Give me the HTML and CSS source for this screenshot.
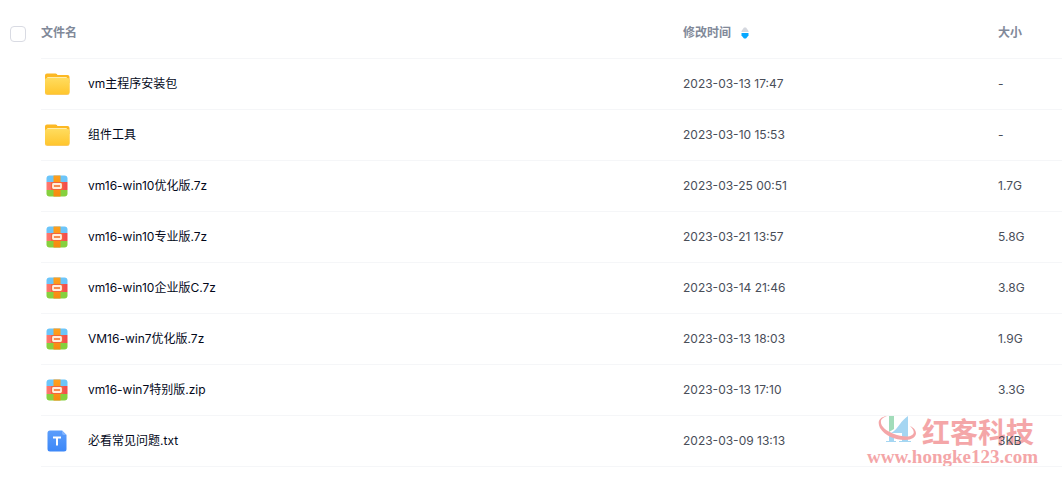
FILE: index.html
```html
<!DOCTYPE html>
<html lang="zh-CN">
<head>
  <meta charset="UTF-8" />
  <meta name="viewport" content="width=device-width, initial-scale=1.0"/>
  <title>文件列表</title>

  <link rel="stylesheet" href="styles.css">
</head>
<body>
  <!-- icons used in the rows -->
  <svg class="defs" width="0" height="0" aria-hidden="true">
    <defs>
      <linearGradient id="folderFront" x1="0" y1="0" x2="0" y2="1">
        <stop offset="0" stop-color="#ffdc5e"/>
        <stop offset="1" stop-color="#ffc62e"/>
      </linearGradient>
      <linearGradient id="txtFill" x1="0" y1="0" x2="0" y2="1">
        <stop offset="0" stop-color="#5b9dfb"/>
        <stop offset="1" stop-color="#3c87f8"/>
      </linearGradient>
      <linearGradient id="zipRed" x1="0" y1="0" x2="1" y2="0">
        <stop offset="0" stop-color="#ff7a70"/>
        <stop offset="1" stop-color="#f04a48"/>
      </linearGradient>
      <linearGradient id="zipBand" x1="0" y1="0" x2="0" y2="1">
        <stop offset="0" stop-color="#ffa01c"/>
        <stop offset="1" stop-color="#f58a10"/>
      </linearGradient>
      <clipPath id="zipShape"><rect x="5.5" y="5.5" width="21" height="21" rx="3"/></clipPath>
    </defs>
    <symbol id="icon-folder" viewBox="0 0 32 32">
      <path d="M4 7.5a2 2 0 0 1 2-2h8.500a2 2 0 0 1 2 1.500H26.500a2 2 0 0 1 2 2v6H4z" fill="#fcb823"/>
      <rect x="6" y="9" width="20" height="6" rx="1" fill="#ffedaa"/>
      <rect x="4" y="10" width="24.5" height="17" rx="2.5" fill="#fbc95c"/>
      <rect x="4" y="10" width="24.5" height="16" rx="2.5" fill="url(#folderFront)"/>
    </symbol>
    <symbol id="icon-zip" viewBox="0 0 32 32">
      <g clip-path="url(#zipShape)">
        <rect x="5" y="5" width="22" height="7" fill="#6cc5f9"/>
        <rect x="5" y="12" width="22" height="8" fill="url(#zipRed)"/>
        <rect x="5" y="20" width="22" height="7" fill="#86d03e"/>
        <rect x="12.5" y="5" width="7" height="22" fill="url(#zipBand)"/>
      </g>
      <rect x="10" y="12" width="12" height="8" rx="1" fill="#f4673b"/>
      <rect x="12" y="14" width="8" height="4" rx="0.5" fill="#f58b50" stroke="#ffeede" stroke-width="1.8"/>
    </symbol>
    <symbol id="icon-txt" viewBox="0 0 32 32">
      <path d="M9 5.5H21l4.500 4.500v14a2.500 2.500 0 0 1-2.500 2.500H9A2.500 2.500 0 0 1 6.500 24V8A2.500 2.500 0 0 1 9 5.500z" fill="url(#txtFill)"/>
      <path d="M21 5.5l4.500 4.500h-2.500a2 2 0 0 1-2-2z" fill="#82b5ff"/>
      <path d="M12 12.5h8M16 12.500v8" fill="none" stroke="#fff" stroke-width="2"/>
    </symbol>
  </svg>

  <main class="file-list">
    <table>
      <thead>
        <tr>
          <th class="check"><input type="checkbox" aria-label="全选"></th>
          <th class="name" scope="col">文件名</th>
          <th class="time" scope="col">
            <button type="button" class="sort">修改时间
              <svg width="8" height="12" viewBox="0 0 8 12" aria-hidden="true">
                <path d="M0.5 5V4L3 0.500h2L7.500 4v1z" fill="#d4d7de"/>
                <path d="M0.5 6h7v2.500L5 11.500H3L0.500 8.500z" fill="#06a7ff"/>
              </svg>
            </button>
          </th>
          <th class="size" scope="col">大小</th>
        </tr>
      </thead>
      <tbody>
        <tr>
          <td class="check"></td>
          <td class="name"><a href="#"><svg class="icon"><use href="#icon-folder"/></svg>vm主程序安装包</a></td>
          <td class="time">2023-03-13 17:47</td>
          <td class="size">-</td>
        </tr>
        <tr>
          <td class="check"></td>
          <td class="name"><a href="#"><svg class="icon"><use href="#icon-folder"/></svg>组件工具</a></td>
          <td class="time">2023-03-10 15:53</td>
          <td class="size">-</td>
        </tr>
        <tr>
          <td class="check"></td>
          <td class="name"><a href="#"><svg class="icon"><use href="#icon-zip"/></svg>vm16-win10优化版.7z</a></td>
          <td class="time">2023-03-25 00:51</td>
          <td class="size">1.7G</td>
        </tr>
        <tr>
          <td class="check"></td>
          <td class="name"><a href="#"><svg class="icon"><use href="#icon-zip"/></svg>vm16-win10专业版.7z</a></td>
          <td class="time">2023-03-21 13:57</td>
          <td class="size">5.8G</td>
        </tr>
        <tr>
          <td class="check"></td>
          <td class="name"><a href="#"><svg class="icon"><use href="#icon-zip"/></svg>vm16-win10企业版C.7z</a></td>
          <td class="time">2023-03-14 21:46</td>
          <td class="size">3.8G</td>
        </tr>
        <tr>
          <td class="check"></td>
          <td class="name"><a href="#"><svg class="icon"><use href="#icon-zip"/></svg>VM16-win7优化版.7z</a></td>
          <td class="time">2023-03-13 18:03</td>
          <td class="size">1.9G</td>
        </tr>
        <tr>
          <td class="check"></td>
          <td class="name"><a href="#"><svg class="icon"><use href="#icon-zip"/></svg>vm16-win7特别版.zip</a></td>
          <td class="time">2023-03-13 17:10</td>
          <td class="size">3.3G</td>
        </tr>
        <tr>
          <td class="check"></td>
          <td class="name"><a href="#"><svg class="icon"><use href="#icon-txt"/></svg>必看常见问题.txt</a></td>
          <td class="time">2023-03-09 13:13</td>
          <td class="size">3KB</td>
        </tr>
      </tbody>
    </table>

    <div class="watermark">
      <div class="brand">
        <svg width="40" height="32" viewBox="0 0 40 32" aria-hidden="true">
          <path d="M8 0h10v1h-2v13l-5 3V1H8z" fill="#a2dcba"/>
          <path d="M11 17l5 3v6h2v1H8v-1h3zM30 1v25h3v1H21v-1h3v-8H13c4-2 6-5 9-9 2-3 5-6 8-8z" fill="#a5d6f2"/>
          <path d="M9 1C1 2-1 7 2 13c5 8 15 12 25 12 9 0 13-5 10-10-1-2-3-3-5-4 4 4 5 7 2 9-4 3-12 1-18-1C8 16 2 11 3 6c0-2 3-4 6-5z" fill="#f4a6a8"/>
        </svg>
        <span>红客科技</span>
      </div>
      <div class="site">www.hongke123.com</div>
    </div>
  </main>
</body>
</html>
```
FILE: styles.css
```css
body {
  margin: 0;
  background: #fff;
  color: #03081a;
  font-family: Inter, "Noto Sans CJK SC", sans-serif;
  font-size: 12px;
  line-height: 18px;
}

.defs {
  position: absolute;
}

.file-list {
  position: relative;
  padding-top: 8px;
}

table {
  width: 100%;
  table-layout: fixed;
  border-collapse: separate;
  border-spacing: 0;
}

th,
td {
  height: 50px;
  padding: 0;
  text-align: left;
  vertical-align: middle;
  border-bottom: 1px solid #f5f6f8;
}

th {
  color: #818999;
  font-weight: 700;
}

.check {
  width: 41px;
  border-bottom: 0;
}

.time {
  width: 315px;
}

.size {
  width: 64px;
}

td.time,
td.size {
  color: #494e59;
}

input[type="checkbox"] {
  appearance: none;
  display: block;
  box-sizing: border-box;
  width: 16px;
  height: 16px;
  margin: 0 0 0 10px;
  border: 1px solid #d9dbe3;
  border-radius: 4px;
  background: #fff;
}

input[type="checkbox"]:checked {
  background: #06a7ff;
  border-color: #06a7ff;
}

.sort {
  display: flex;
  align-items: center;
  gap: 10px;
  padding: 0;
  border: 0;
  background: none;
  color: inherit;
  font: inherit;
  cursor: pointer;
}

.name a {
  display: flex;
  align-items: center;
  gap: 15px;
  color: inherit;
  text-decoration: none;
}

.name a:hover {
  color: #06a7ff;
}

.icon {
  width: 32px;
  height: 32px;
  flex-shrink: 0;
}

/* sits under the text of the last row */
.watermark {
  position: absolute;
  right: 24px;
  bottom: 0;
  z-index: -1;
  color: #f4a6a8;
  font-weight: 700;
}

.brand {
  display: flex;
  align-items: center;
  justify-content: flex-end;
  gap: 4px;
  padding-right: 4px;
  font-family: "Noto Sans CJK SC", sans-serif;
  font-size: 28px;
  line-height: 32px;
}

.site {
  font-family: "Liberation Serif", serif;
  font-size: 19px;
  line-height: 20px;
}
```
